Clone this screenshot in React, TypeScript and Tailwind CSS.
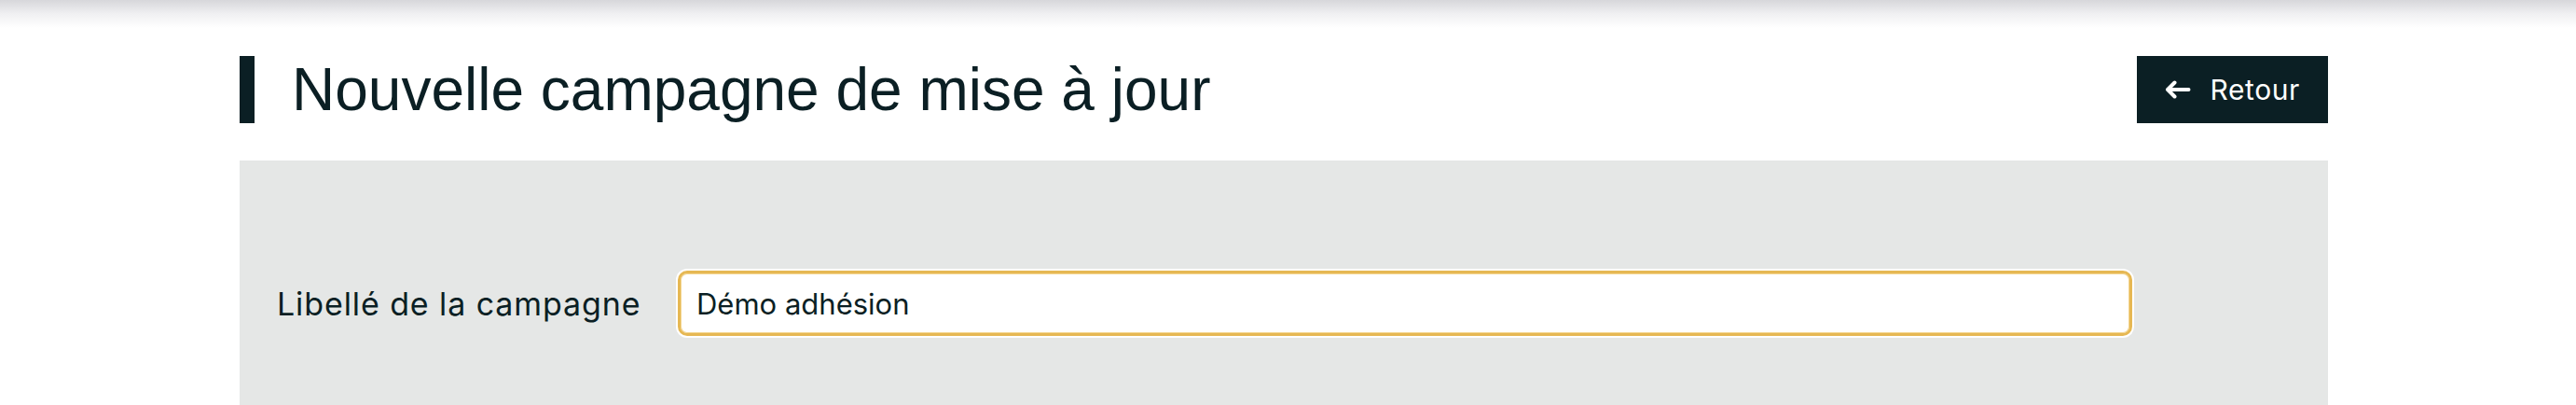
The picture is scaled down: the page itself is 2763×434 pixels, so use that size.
import React from "react";

export default function App() {
  return (
    <div className="min-h-[434px] bg-white">
      <div className="h-[30px] bg-gradient-to-b from-[#d7d7db] via-[#f0f0f2] to-white" />
      <div className="ml-[257px] mt-[30px] w-[2240px]">
        <div className="flex h-[72px] items-center justify-between">
          <div className="flex h-full items-center">
            <div className="h-[72px] w-[16px] bg-[#0b1f24]" />
            <h1
              className="ml-[40px] text-[64px] leading-none text-[#0b1f24]"
              style={{ fontFamily: '"Liberation Sans", Arial, sans-serif' }}
            >
              Nouvelle campagne de mise à jour
            </h1>
          </div>
          <button
            className="flex h-[72px] items-center gap-[20px] bg-[#0b1f24] px-[30px] text-[30px] tracking-[0.6px] text-white"
            style={{ fontFamily: 'Inter, "Noto Sans", sans-serif' }}
          >
            <svg width="28" height="20" viewBox="0 0 28 20" fill="none">
              <path
                d="M25.5 10H3M10.5 2.5L3 10l7.5 7.5"
                stroke="white"
                strokeWidth="4"
                strokeLinecap="round"
                strokeLinejoin="round"
              />
            </svg>
            <span>Retour</span>
          </button>
        </div>
        <div className="mt-[40px] bg-[#e5e7e6] px-[40px] pb-[120px] pt-[118px]">
          <div
            className="flex items-center gap-[40px]"
            style={{ fontFamily: 'Inter, "Noto Sans", sans-serif' }}
          >
            <label className="w-[390px] shrink-0 whitespace-nowrap text-[34px] tracking-[0.9px] text-[#0b1f24]">
              Libellé de la campagne
            </label>
            <input
              className="h-[70px] w-[1560px] rounded-[10px] border-[3px] border-[#e6b853] bg-white px-[17px] text-[31px] text-[#0b1f24] shadow-[0_0_0_2px_#ffffff,inset_0_0_0_1px_#f3d58f] outline-none"
              defaultValue="Démo adhésion"
            />
          </div>
        </div>
      </div>
    </div>
  );
}
